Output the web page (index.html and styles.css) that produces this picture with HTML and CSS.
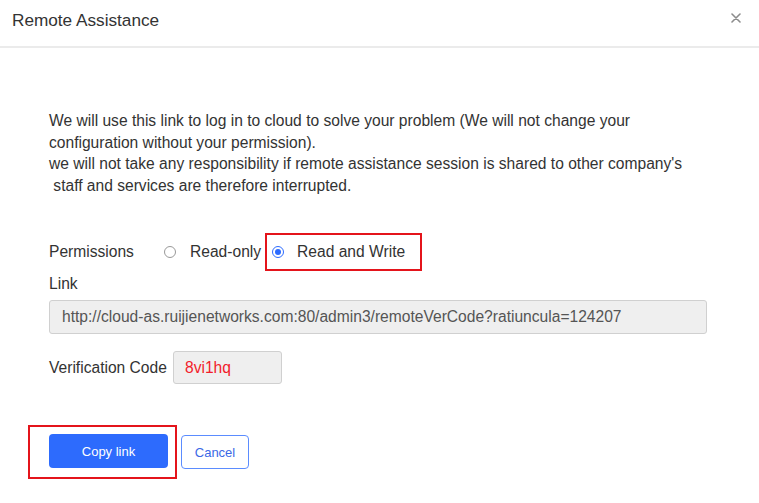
FILE: index.html
```html
<!DOCTYPE html>
<html>
<head>
<meta charset="utf-8">
<link rel="stylesheet" href="styles.css">
</head>
<body>
<div class="dialog">
  <div class="header">
    <span class="title">Remote Assistance</span>
    <span class="close">
      <svg width="10" height="10" viewBox="0 0 10 10"><path d="M1 1L9 9M9 1L1 9" stroke="#8c8c8c" stroke-width="1.6" stroke-linecap="round"/></svg>
    </span>
  </div>
  <div class="body">
    <p class="notice">We will use this link to log in to cloud to solve your problem (We will not change your configuration without your permission).<br>we will not take any responsibility if remote assistance session is shared to other company's<br>&nbsp;staff and services are therefore interrupted.</p>
    <div class="perm-row">
      <span class="perm-label">Permissions</span>
      <label class="radio"><span class="dot"></span><span>Read-only</span></label>
      <label class="radio checked highlight"><span class="dot"></span><span>Read and Write</span></label>
    </div>
    <div class="link-label">Link</div>
    <div class="input link-input">http://cloud-as.ruijienetworks.com:80/admin3/remoteVerCode?ratiuncula=124207</div>
    <div class="code-row">
      <span class="code-label">Verification Code</span>
      <div class="input code-input">8vi1hq</div>
    </div>
    <div class="actions">
      <div class="highlight-btn"><button class="btn primary">Copy link</button></div>
      <button class="btn ghost">Cancel</button>
    </div>
  </div>
</div>
</body>
</html>
```
FILE: styles.css
```css
html, body {
  margin: 0;
  padding: 0;
  background: #fff;
}
body {
  font-family: "Liberation Sans", Arial, sans-serif;
  color: #333;
}
.dialog {
  width: 759px;
  height: 503px;
}
.header {
  border-bottom: 2px solid #ebebeb;
  display: flex;
  align-items: center;
  justify-content: space-between;
  padding: 2px 18px 8px 12px;
  height: 36px;
}
.title {
  font-size: 17.2px;
  color: #333;
}
.close {
  display: flex;
  margin-top: -4px;
}
.body {
  padding: 0 0 0 49px;
}
.notice {
  margin: 62px 0 0 0;
  font-size: 15.6px;
  line-height: 21.5px;
  width: 662px;
}
.perm-row {
  margin-top: 37px;
  display: flex;
  align-items: center;
  height: 38px;
  font-size: 15.6px;
}
.perm-label {
  width: 115px;
}
.radio {
  display: flex;
  align-items: center;
  height: 34px;
}
.radio .dot {
  width: 10px;
  height: 10px;
  border: 1px solid #999;
  border-radius: 50%;
  box-sizing: content-box;
  margin-right: 14px;
  position: relative;
}
.radio.checked .dot {
  border-color: #2c6bff;
  margin-right: 13px;
}
.radio.checked .dot::after {
  content: "";
  position: absolute;
  left: 2px;
  top: 2px;
  width: 6px;
  height: 6px;
  border-radius: 50%;
  background: #2c6bff;
}
.highlight {
  border: 2px solid #e4141b;
  padding: 0 15px 0 5px;
  margin-left: 4px;
  height: 34px;
}
.link-label {
  font-size: 15.6px;
  margin-top: 2px;
  line-height: 22px;
}
.input {
  background: #efefef;
  border: 1px solid #d0d0d0;
  border-radius: 3px;
  box-sizing: border-box;
  font-size: 15.6px;
  display: flex;
  align-items: center;
}
.link-input {
  margin-top: 5px;
  width: 658px;
  height: 34px;
  padding-left: 12px;
  color: #555;
}
.code-row {
  margin-top: 17px;
  display: flex;
  align-items: center;
  font-size: 15.6px;
}
.code-label {
  width: 124px;
}
.code-input {
  width: 109px;
  height: 33px;
  padding-left: 11px;
  color: #f21d2c;
}
.actions {
  margin: 41px 0 0 -21px;
  display: flex;
  align-items: center;
}
.highlight-btn {
  border: 2px solid #e4141b;
  padding: 7px 7px 9px 19px;
}
.btn {
  font-family: "Liberation Sans", Arial, sans-serif;
  font-size: 13px;
  height: 34px;
  border-radius: 4px;
  cursor: pointer;
  display: block;
}
.primary {
  width: 119px;
  background: #2d6bfd;
  border: none;
  color: #fff;
}
.ghost {
  margin-left: 4px;
  width: 68px;
  background: #fff;
  border: 1px solid #5b8cff;
  color: #3b69e6;
}
```
